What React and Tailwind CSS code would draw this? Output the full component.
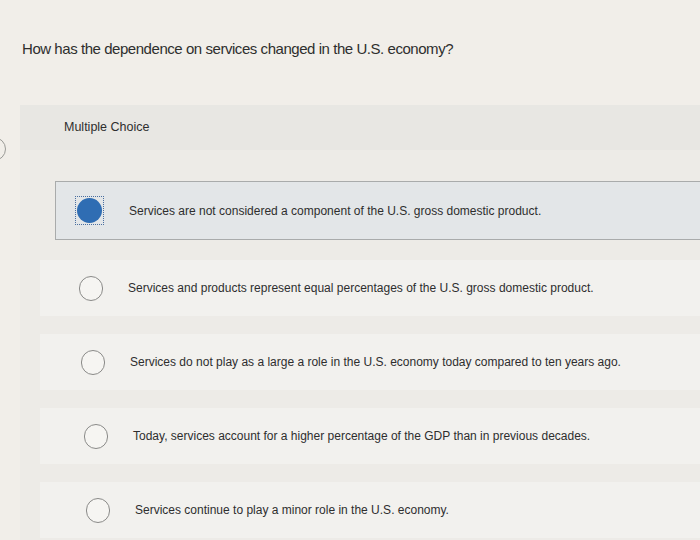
import React from 'react';

const options = [
  { text: 'Services are not considered a component of the U.S. gross domestic product.', selected: true },
  { text: 'Services and products represent equal percentages of the U.S. gross domestic product.', shift: 'pl-[25px]' },
  { text: 'Services do not play as a large a role in the U.S. economy today compared to ten years ago.', shift: 'pl-[27px]' },
  { text: 'Today, services account for a higher percentage of the GDP than in previous decades.', shift: 'pl-[30px]' },
  { text: 'Services continue to play a minor role in the U.S. economy.', shift: 'pl-[32px]' },
];

const Radio = ({ selected }) =>
  selected ? (
    <div className="w-[29px] h-[29px] border border-dotted border-[#4a6fa0] flex items-center justify-center shrink-0">
      <div className="w-[25px] h-[25px] rounded-full bg-[#2f6db3]" />
    </div>
  ) : (
    <div className="w-[24px] h-[25px] rounded-full border-[1.5px] border-[#8a8a88] bg-[#f6f5f2] shrink-0" />
  );

export default function App() {
  return (
    <div
      className="relative w-[700px] h-[540px] overflow-hidden bg-[#f1eee9] text-[#2e2e2e]"
      style={{ fontFamily: '"Liberation Sans", Arial, sans-serif' }}
    >
      {/* clipped control at left edge */}
      <div className="absolute left-[-18px] top-[137px] w-[24px] h-[24px] rounded-full border border-[#9a9a96]" />

      <div className="pt-[39px] pl-[22px] text-[15px] leading-5 tracking-[-0.45px]">
        How has the dependence on services changed in the U.S. economy?
      </div>

      <div className="mt-[46px] ml-[20px] bg-[#edebe7]">
        <div className="h-[45px] flex items-center pl-[44px] text-[12.5px] bg-[#e8e7e3]">
          Multiple Choice
        </div>

        <div className="pt-[31px] pl-[35px]">
          <div className="h-[59px] flex items-center gap-[25px] pl-[19px] bg-[#e3e6e8] border border-[#a9abab] border-r-0 text-[12px]">
            <Radio selected />
            <span>{options[0].text}</span>
          </div>
        </div>

        <div className="flex flex-col gap-[18px] pt-[20px] pl-[20px] pb-[20px]">
          {options.slice(1).map((o, i) => (
            <div
              key={i}
              className={`h-[56px] flex items-center gap-[25px] bg-[#f2f1ee] text-[12px] ${o.shift}`}
            >
              <div className="pl-[14px]">
                <Radio />
              </div>
              <span>{o.text}</span>
            </div>
          ))}
        </div>
      </div>
    </div>
  );
}
